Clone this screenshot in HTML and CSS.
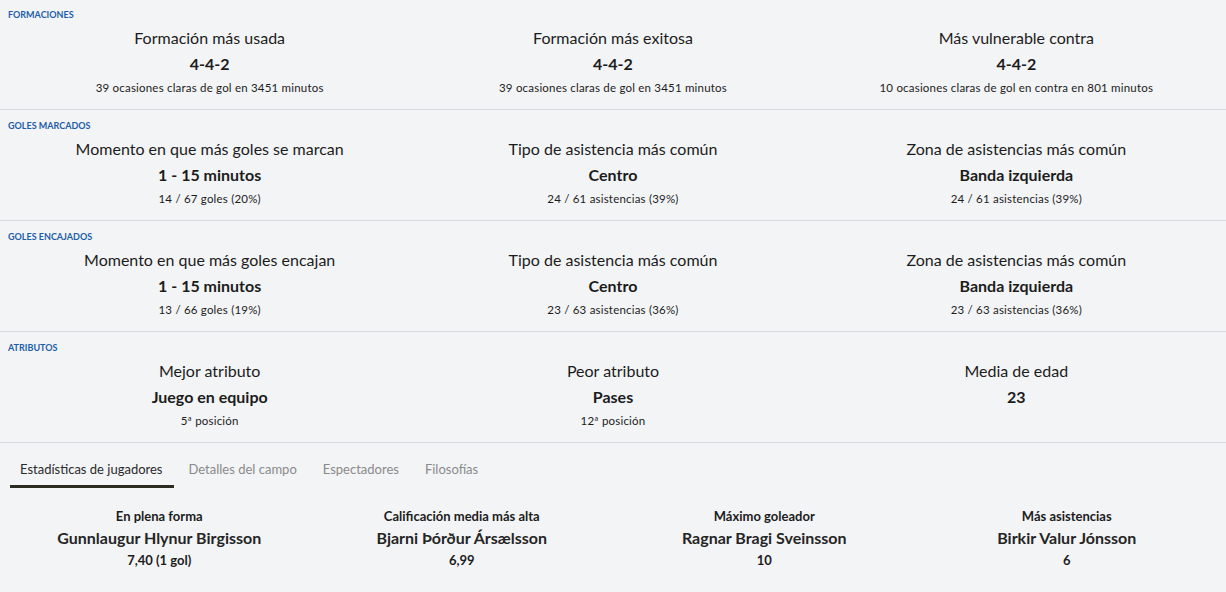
FILE: index.html
```html
<!DOCTYPE html>
<html lang="es">
<head>
<meta charset="utf-8">
<title>Estadísticas</title>
<link rel="stylesheet" href="styles.css">
</head>
<body>
<div class="page">
  <section class="section first">
    <div class="label">FORMACIONES</div>
    <div class="cols">
      <div class="col"><div class="head">Formación más usada</div><div class="value">4-4-2</div><div class="sub">39 ocasiones claras de gol en 3451 minutos</div></div>
      <div class="col"><div class="head">Formación más exitosa</div><div class="value">4-4-2</div><div class="sub">39 ocasiones claras de gol en 3451 minutos</div></div>
      <div class="col"><div class="head">Más vulnerable contra</div><div class="value">4-4-2</div><div class="sub">10 ocasiones claras de gol en contra en 801 minutos</div></div>
    </div>
  </section>
  <section class="section">
    <div class="label">GOLES MARCADOS</div>
    <div class="cols">
      <div class="col"><div class="head">Momento en que más goles se marcan</div><div class="value">1 - 15 minutos</div><div class="sub">14 / 67 goles (20%)</div></div>
      <div class="col"><div class="head">Tipo de asistencia más común</div><div class="value">Centro</div><div class="sub">24 / 61 asistencias (39%)</div></div>
      <div class="col"><div class="head">Zona de asistencias más común</div><div class="value">Banda izquierda</div><div class="sub">24 / 61 asistencias (39%)</div></div>
    </div>
  </section>
  <section class="section">
    <div class="label">GOLES ENCAJADOS</div>
    <div class="cols">
      <div class="col"><div class="head">Momento en que más goles encajan</div><div class="value">1 - 15 minutos</div><div class="sub">13 / 66 goles (19%)</div></div>
      <div class="col"><div class="head">Tipo de asistencia más común</div><div class="value">Centro</div><div class="sub">23 / 63 asistencias (36%)</div></div>
      <div class="col"><div class="head">Zona de asistencias más común</div><div class="value">Banda izquierda</div><div class="sub">23 / 63 asistencias (36%)</div></div>
    </div>
  </section>
  <section class="section">
    <div class="label">ATRIBUTOS</div>
    <div class="cols">
      <div class="col"><div class="head">Mejor atributo</div><div class="value">Juego en equipo</div><div class="sub">5ª posición</div></div>
      <div class="col"><div class="head">Peor atributo</div><div class="value">Pases</div><div class="sub">12ª posición</div></div>
      <div class="col"><div class="head">Media de edad</div><div class="value">23</div></div>
    </div>
  </section>
  <nav class="tabs">
    <div class="tab active">Estadísticas de jugadores</div>
    <div class="tab">Detalles del campo</div>
    <div class="tab">Espectadores</div>
    <div class="tab">Filosofías</div>
  </nav>
  <div class="players">
    <div class="player"><div class="ptitle">En plena forma</div><div class="pname">Gunnlaugur Hlynur Birgisson</div><div class="pvalue">7,40 (1 gol)</div></div>
    <div class="player"><div class="ptitle">Calificación media más alta</div><div class="pname">Bjarni Þórður Ársælsson</div><div class="pvalue">6,99</div></div>
    <div class="player"><div class="ptitle">Máximo goleador</div><div class="pname">Ragnar Bragi Sveinsson</div><div class="pvalue">10</div></div>
    <div class="player"><div class="ptitle">Más asistencias</div><div class="pname">Birkir Valur Jónsson</div><div class="pvalue">6</div></div>
  </div>
</div>
</body>
</html>
```

FILE: styles.css
```css
* { box-sizing: border-box; }
html, body {
  margin: 0;
  padding: 0;
  background: #f3f4f6;
}
body {
  font-family: "Lato", "Liberation Sans", sans-serif;
  color: #1c1c1c;
  width: 1226px;
  height: 592px;
  overflow: hidden;
}
.section {
  height: 111px;
  border-bottom: 1px solid #d5dbe1;
  padding: 10px 8px 0;
}
.section.first {
  height: 110px;
  padding-top: 9px;
}
.label {
  font-size: 9px;
  line-height: 12px;
  font-weight: 700;
  color: #1d5ea8;
}
.cols {
  display: grid;
  grid-template-columns: repeat(3, 1fr);
  margin-top: 7px;
  text-align: center;
}
.head {
  font-size: 16px;
  line-height: 20px;
}
.value {
  font-size: 16px;
  line-height: 20px;
  font-weight: 700;
  margin-top: 6px;
}
.sub {
  font-size: 11.5px;
  letter-spacing: 0.2px;
  line-height: 16px;
  margin-top: 6px;
}
.tabs {
  display: flex;
  gap: 5px;
  padding-left: 10px;
}
.tab {
  padding: 18px 11px 8px 10px;
  font-size: 13px;
  line-height: 16px;
  color: #8a8a8a;
  border-bottom: 3px solid transparent;
}
.tab.active {
  color: #2a2a2a;
  border-bottom-color: #2b2b22;
}
.players {
  display: grid;
  grid-template-columns: repeat(4, 1fr);
  padding: 20px 8px 0;
  text-align: center;
}
.ptitle {
  font-size: 13px;
  line-height: 16px;
  font-weight: 700;
}
.pname {
  font-size: 16px;
  line-height: 20px;
  font-weight: 700;
  margin-top: 4px;
  color: #252525;
}
.pvalue {
  font-size: 13px;
  line-height: 16px;
  font-weight: 700;
  margin-top: 4px;
}
```
